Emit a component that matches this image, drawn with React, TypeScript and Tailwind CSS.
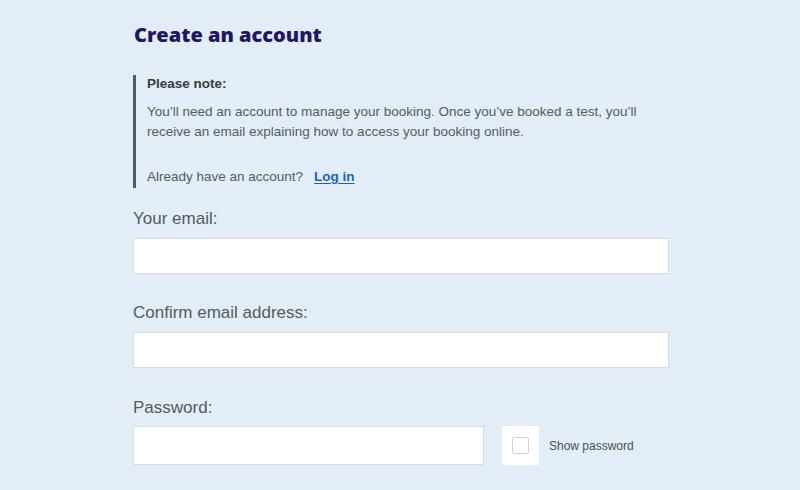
import React from "react";

export default function App() {
  return (
    <div className="min-h-[490px] w-full bg-[#e3edf8]" style={{ fontFamily: '"Liberation Sans", Arial, sans-serif' }}>
      <div className="ml-[133px] w-[536px] pt-[21px]">
        <h1
          className="text-[20px] leading-[28px] font-extrabold text-[#1f1761] mb-[26px] pl-[1px]"
          style={{ fontFamily: '"Open Sans", "Liberation Sans", sans-serif' }}
        >
          Create an account
        </h1>

        <div className="border-l-[3px] border-[#4b5e64] pl-[11px] pb-[1px] h-[113px]">
          <p className="text-[13.5px] leading-[18px] font-bold text-[#3b3b3b]">Please note:</p>
          <p className="mt-[9px] w-[500px] text-[13.5px] leading-[20px] text-[#555b60]">
            You’ll need an account to manage your booking. Once you’ve booked a test, you’ll receive an email explaining how to access your booking online.
          </p>
          <p className="mt-[25px] text-[13.5px] leading-[20px] text-[#555b60]">
            Already have an account?
            <a href="#" className="ml-[11px] font-bold text-[#1565c0] underline underline-offset-2">
              Log in
            </a>
          </p>
        </div>

        <label className="block mt-[21px] text-[17px] leading-[20px] text-[#555a5e]">Your email:</label>
        <input
          type="email"
          className="block mt-[9px] w-[536px] h-[36px] bg-white border border-[#d6dce1] outline-none"
        />

        <label className="block mt-[29px] text-[17px] leading-[20px] text-[#555a5e]">Confirm email address:</label>
        <input
          type="email"
          className="block mt-[9px] w-[536px] h-[36px] bg-white border border-[#d6dce1] outline-none"
        />

        <label className="block mt-[30px] text-[17px] leading-[20px] text-[#555a5e]">Password:</label>
        <div className="mt-[8px] flex items-center">
          <input
            type="password"
            className="block w-[351px] h-[39px] bg-white border border-[#d6dce1] outline-none"
          />
          <div className="ml-[18px] w-[37px] h-[39px] bg-white flex items-center justify-center">
            <div className="w-[17px] h-[17px] rounded-[2px] border border-[#cfd3d6] bg-white" />
          </div>
          <span className="ml-[10px] text-[12px] text-[#4a4f53]">Show password</span>
        </div>
      </div>
    </div>
  );
}
